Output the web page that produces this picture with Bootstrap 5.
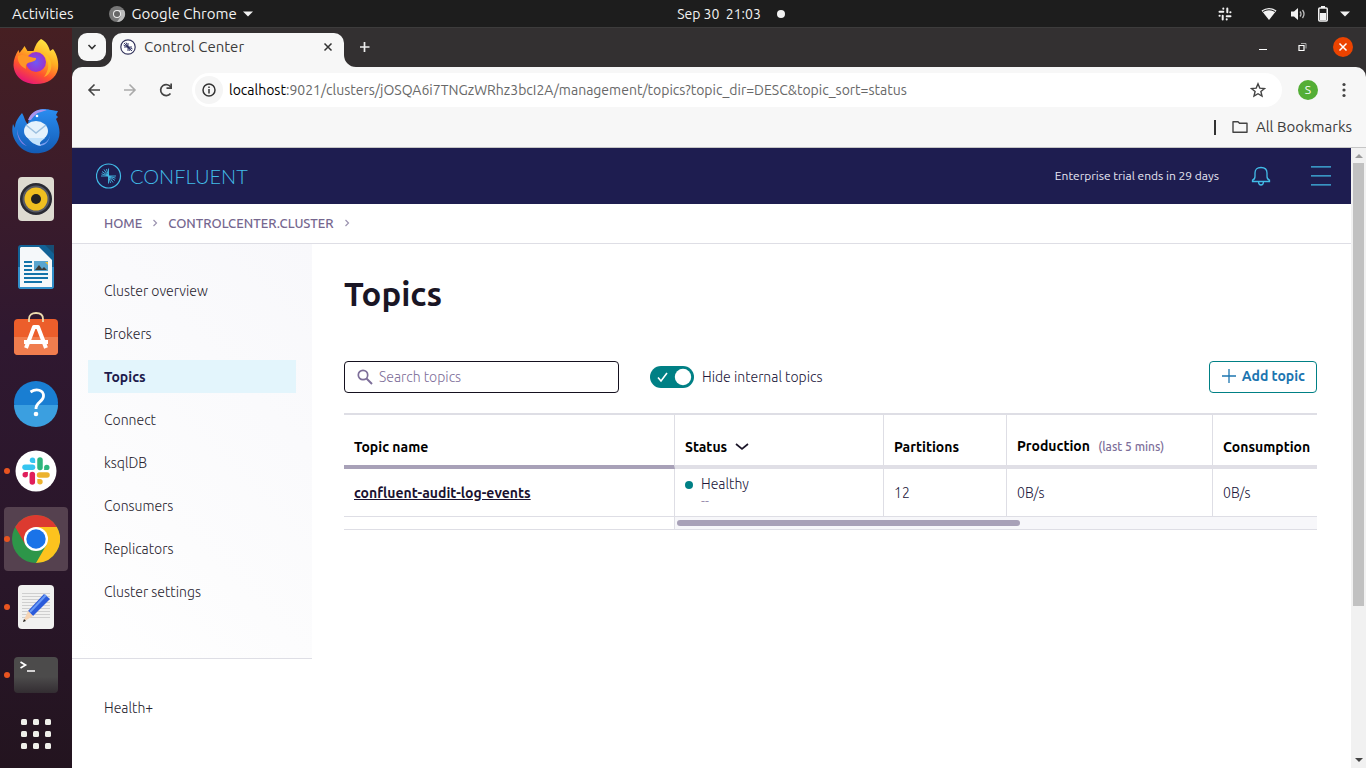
<!DOCTYPE html>
<html lang="en">
<head>
<meta charset="utf-8">
<meta name="viewport" content="width=device-width, initial-scale=1">
<title>Control Center</title>
<link href="https://cdn.jsdelivr.net/npm/bootstrap@5.3.0/dist/css/bootstrap.min.css" rel="stylesheet">
<style>
  :root { --line: #dedee5; --ink: #1b1528; --teal: #008085; --lilac: #7d6e99; }
  body { font-family: Ubuntu, "Open Sans", sans-serif; font-size: 14px; line-height: 20px; color: #000; background: #2c1830; }
  button { font: inherit; }
  svg { display: block; flex: none; }
  .desktop { height: 100vh; }
  .plain { background: none; border: 0; padding: 0; color: inherit; }

  .top-panel { grid-template-columns: 1fr auto 1fr; height: 28px; background: #1d1d1d; border-bottom: 1px solid #3d3c3c; color: #f2f2f2; font-size: 15px; }
  .app-menu { gap: 6px; margin-left: 34px; }
  .clock { padding-left: 96px; font-size: 14px; }
  .clock-dot { width: 8px; height: 8px; background: #f2f2f2; }

  .dock { width: 72px; background: linear-gradient(#461f22, #3c1c2a 20%, #2f1830 42%, #291629 75%, #23141f); padding-top: 3px; gap: 4px; }
  .dock-item { width: 64px; height: 64px; border-radius: 4px; position: relative; }
  .dock-item.current { background: #55414f; }
  .dock-item.running::before { content: ""; position: absolute; left: 0; top: 29px; width: 6px; height: 6px; border-radius: 50%; background: #e95420; }
  .dock-apps { width: 64px; height: 46px; }

  .tab-strip { height: 39px; background: #333031; padding: 5px 13px 0 6px; }
  .tab-search { width: 28px; height: 28px; border-radius: 9px; background: #f7f7f7; }
  .browser-tab { position: relative; width: 232px; height: 34px; margin-left: 6px; padding: 0 10px 6px 8px; border-radius: 10px 10px 0 0; background: #f7f7f7; color: #3c3c3c; font-size: 15px; }
  .tab-foot { position: absolute; bottom: 0; }
  .tab-foot.before { right: 100%; }
  .tab-foot.after { left: 100%; }
  .win-buttons { gap: 22px; height: 28px; }
  .win-close { width: 20px; height: 20px; background: #ec4300; }

  .browser-frame { background: #333031; }
  .toolbars { background: #f7f7f7; border-radius: 10px 10px 0 0; border-bottom: 1px solid #c6c6c6; height: 81px; color: #3c3c3c; }
  .toolbar-row { height: 34px; margin-top: 6px; padding: 0 20px 0 14px; }
  .nav-keys { width: 106px; gap: 20px; }
  .omnibox { background: #fff; border-radius: 17px; padding: 0 16px 0 3px; }
  .site-info { width: 28px; height: 28px; background: #f5f5f5; }
  .url { color: #686868; outline: 0; white-space: nowrap; margin-left: 6px; }
  .profile { width: 20px; height: 20px; background: #54ae36; color: #fff; font-size: 12px; }
  .bookmarks { height: 40px; padding: 0 14px 0 0; font-size: 15px; }
  .bookmarks-rule { width: 2px; height: 15px; background: #333; margin-right: 16px; }

  .viewport { background: #fff; min-height: 0; }
  .scroll-rail { width: 15px; background: #f1f1f1; }
  .scroll-key { height: 15px; }
  .scroll-thumb { width: 11px; height: 75%; background: #c1c1c1; }

  .brand-bar { height: 56px; background: #1e1d50; padding: 0 20px 0 24px; color: #e7e6f2; font-size: 12px; }
  .brand-name { font-family: Lato, sans-serif; font-weight: 300; font-size: 20px; color: #42bce8; }
  .crumbs { height: 40px; padding: 0 32px 1px; border-bottom: 1px solid var(--line); font-size: 13px; }
  .crumbs a { color: #75678f; font-weight: 500; }

  .side { width: 240px; }
  .side-main { padding: 30px 16px 50px; gap: 10px; border-bottom: 1px solid var(--line); background: linear-gradient(225deg, #f8f8fb, #fcfcfd 65%, #fff); }
  .side-more { padding: 32px 16px; }
  .side .nav-link { height: 33px; padding: 7px 16px; color: #28242f; font-weight: 300; }
  .side .nav-link.active { background: #e3f5fc; color: #1d1b4c; font-weight: 700; }

  .content { padding: 31px 34px 0 32px; min-width: 0; }
  .content h1 { font-size: 33px; line-height: 38px; font-weight: 700; color: #1a1625; }
  .controls { margin: 48px 0 20px; gap: 31px; }
  .search-box { width: 275px; height: 32px; border: 1px solid #15111f; border-radius: 4px; padding: 0 12px; gap: 6px; }
  .search-box input { border: 0; outline: 0; padding: 0; color: var(--ink); min-width: 0; font-weight: 300; }
  .search-box input::placeholder { color: var(--lilac); }
  .form-switch.internal { padding: 0; height: 32px; margin: 0; gap: 8px; color: #21163a; font-weight: 300; }
  .form-switch.internal .form-check-input { width: 44px; height: 22px; margin: 0; border: 0; background-color: var(--teal); background-size: auto; background-repeat: no-repeat; background-position: center;
    background-image: url("data:image/svg+xml,%3Csvg xmlns='http://www.w3.org/2000/svg' width='44' height='22' viewBox='0 0 44 22'%3E%3Cpath d='M8 11.5l3 3.5 6-8' fill='none' stroke='%23fff' stroke-width='1.6'/%3E%3Ccircle cx='33' cy='11' r='8.2' fill='%23fff'/%3E%3C/svg%3E"); }
  .add-topic { height: 32px; padding: 0 11px 2px 12px; border: 1px solid var(--teal); border-radius: 4px; background: #fff; color: #1c75b0; font-weight: 700; gap: 6px; }

  .topics { table-layout: fixed; width: 100%; border-top: 2px solid var(--line); border-collapse: separate; border-spacing: 0; }
  .topics th, .topics td { border-right: 1px solid var(--line); padding: 0 10px; overflow: hidden; white-space: nowrap; }
  .topics th:last-child, .topics td:last-child { border-right: 0; padding-right: 0; }
  .topics th { height: 54px; border-bottom: 4px solid #e0dfe6; padding-bottom: 8px; vertical-align: bottom; font-weight: 700; }
  .topics th:first-child { border-bottom-color: #a8a1b8; }
  .topics th small { font-size: 12px; font-weight: 500; color: var(--lilac); margin-left: 5px; }
  .topics td { height: 48px; border-bottom: 1px solid var(--line); vertical-align: middle; color: #21163a; font-weight: 300; }
  .topics a { color: #1b1230; font-weight: 700; }
  .topics .scroll-line td { height: 13px; padding: 0 2px; line-height: 0; }
  .topics .scroll-line td:last-child { background: #f7f7fa; }
  .scroll-bar { width: 343px; height: 6px; border-radius: 3px; background: #a8a1b8; }
  .topics .status-cell { padding-bottom: 4px; }
  .status-dot { width: 8px; height: 8px; margin-top: 7px; background: var(--teal); }
  .status-note { font-size: 14px; line-height: 14px; color: #968cab; }
  .col-name { width: 331px; } .col-status { width: 209px; } .col-parts { width: 123px; } .col-prod { width: 206px; }
</style>
</head>
<body>
<div class="desktop d-flex flex-column overflow-hidden">

  <header class="top-panel d-grid align-items-center flex-shrink-0">
    <div class="d-flex align-items-center">
      <button class="plain ms-2 ps-1">Activities</button>
      <button class="plain app-menu d-flex align-items-center">
        <svg width="18" height="18" viewBox="0 0 18 18"><circle cx="9" cy="9" r="8" fill="#777"/><path d="M9 9V5h7a8 8 0 0 1-7 12l4-6z" fill="#bbb"/><circle cx="9" cy="9" r="4" fill="#eee"/><circle cx="9" cy="9" r="3" fill="#666"/></svg>
        Google Chrome
        <svg width="10" height="6" viewBox="0 0 10 6"><path d="M0 .5h10L5 5.500z" fill="#f2f2f2"/></svg>
      </button>
    </div>
    <button class="plain clock d-flex align-items-center"><span>Sep 30&nbsp; 21:03</span><span class="clock-dot rounded-circle ms-3"></span></button>
    <div class="d-flex align-items-center justify-content-end pe-3">
      <svg class="me-4" width="14" height="14" viewBox="0 0 14 14" fill="none" stroke="#f2f2f2" stroke-width="2" stroke-linecap="round"><path d="M5.300 4.700H1.500M9.300 5.300V1.500M8.700 9.300h3.800M4.700 8.700v3.800M5.300 1.500v.2M12.500 5.300h-.2M8.700 12.500v-.2M1.500 8.700h.2"/></svg>
      <svg class="ms-1 me-2" width="18" height="14" viewBox="0 0 18 14"><path d="M1.500 3.500Q9-1.500 16.500 3.500L9 13z" fill="#f2f2f2"/><path d="M3 4.500Q9 1 15 4.500" stroke="#1d1d1d" fill="none"/></svg>
      <svg class="ms-1 me-2" width="16" height="14" viewBox="0 0 16 14"><path d="M1 4.500h3L8 1v12L4 9.500H1z" fill="#f2f2f2"/><path d="M10 4.500q2 2.500 0 5M12.500 3q3 4 0 8" fill="none" stroke="#bbb" stroke-width="1.300"/></svg>
      <svg class="ms-1 me-2" width="10" height="16" viewBox="0 0 10 16"><path d="M3 0h4v2H3z" fill="#f2f2f2"/><rect x=".75" y="2" width="8.500" height="13" rx="1" fill="none" stroke="#f2f2f2" stroke-width="1.500"/><path d="M2 7h6v7H2z" fill="#f2f2f2"/></svg>
      <svg class="ms-1" width="10" height="6" viewBox="0 0 10 6"><path d="M0 .5h10L5 5.500z" fill="#f2f2f2"/></svg>
    </div>
  </header>

  <div class="d-flex flex-grow-1 overflow-hidden">
    <nav class="dock d-flex flex-column align-items-center flex-shrink-0" aria-label="Dock">
      <button class="plain dock-item d-flex align-items-center justify-content-center" aria-label="Firefox">
        <svg width="48" height="48" viewBox="0 0 48 48"><defs><linearGradient id="fx" x1=".8" y1="0" x2=".3" y2="1"><stop offset="0" stop-color="#fff14a"/><stop offset=".4" stop-color="#ffae22"/><stop offset=".7" stop-color="#ff552d"/><stop offset="1" stop-color="#e5127b"/></linearGradient><radialGradient id="fp"><stop offset="0" stop-color="#6d59f5"/><stop offset="1" stop-color="#9b32ce"/></radialGradient></defs><path d="M29 0c5 2 8 8 9 12l3-2c4 5 6 13 5 20-2 9-10 15-22 15S2 38 1.500 26c0-6 2-10 5-15l1 3c2-3 4-5 5-7l3 5h6c2-6 4-10 7.500-12z" fill="url(#fx)"/><circle cx="24" cy="23" r="10" fill="url(#fp)"/><path d="M6 17c6-3 9 1 18 2 1 3-5 4-8 5-3 2-2 4-2 6-6-3-9-8-8-13z" fill="#ff9525"/><path d="M29 14c7 1 12 8 10 16-1 4-4 7-7 8 5-7 5-12 3-17-1-3-3-5-6-7z" fill="#ffc229" opacity=".7"/></svg>
      </button>
      <button class="plain dock-item d-flex align-items-center justify-content-center" aria-label="Thunderbird">
        <svg width="48" height="48" viewBox="0 0 48 48"><defs><linearGradient id="tb" x1="0" y1="0" x2="0" y2="1"><stop offset="0" stop-color="#2a8df0"/><stop offset="1" stop-color="#135bb5"/></linearGradient></defs><path d="M10 6c3 5 3 9 6 11 1-9 7-15 16-15 4 0 6 1 14 2l-2 4 2 2-2 2c5 10 5 20-2 27-8 9-25 10-34 1C1 33-1 25 1 17l2 4C3 14 7 10 10 6z" fill="url(#tb)"/><path d="M16 13C19 5 26 1 35 3l-6 2c-5 1-7 4-10 8z" fill="#a994ed"/><path d="M5 22c1 8 4 13 10 17-7-2-10-9-10-17z" fill="#8c84e8"/><path d="M38 28c-1 6-5 9-13 10 5 2 12-1 13-10z" fill="#7d9ff0"/><ellipse cx="24" cy="24" rx="12" ry="10" fill="#e5f2fc"/><path d="M16 31h17c-3 3-7 4-4 8-6-1-11-4-13-8z" fill="#c3e2fb"/><path d="M14 18l10 8 10-8" fill="none" stroke="#9dc0df" stroke-width="1.500"/><circle cx="25" cy="9" r="1.300" fill="#fff"/></svg>
      </button>
      <button class="plain dock-item d-flex align-items-center justify-content-center" aria-label="Rhythmbox">
        <svg width="48" height="48" viewBox="0 0 48 48"><rect x="6" y="2" width="36" height="44" rx="4" fill="#dedbd1"/><circle cx="24" cy="24" r="16" fill="#292a32"/><circle cx="24" cy="24" r="13.500" fill="#565965"/><circle cx="24" cy="24" r="11.500" fill="#efbf20"/><circle cx="24" cy="24" r="5" fill="#222"/></svg>
      </button>
      <button class="plain dock-item d-flex align-items-center justify-content-center" aria-label="LibreOffice Writer">
        <svg width="48" height="48" viewBox="0 0 48 48"><path d="M9 2h19l14 14v27a3 3 0 0 1-3 3H9a3 3 0 0 1-3-3V5a3 3 0 0 1 3-3z" fill="#126296"/><path d="M6 24h36v19a3 3 0 0 1-3 3H9a3 3 0 0 1-3-3z" fill="#318fca"/><path d="M9 4h18l13 13v27H8V5z" fill="#f5f8fa"/><path d="M27 2h15v15z" fill="#126296"/><path d="M33 2h9v9z" fill="#174e75"/><path d="M12 19h8m-8 4h8m-8 4h8m-8 4h24m-24 4h24m-24 4h18" stroke="#1474aa" stroke-width="2"/><path d="M22 18h14v10H22z" fill="#59a5cf"/><path d="M23 27l4-5 3 4 2-2 3 3z" fill="#3c3c38"/><path d="M33 19h3v3z" fill="#eabf3f"/></svg>
      </button>
      <button class="plain dock-item d-flex align-items-center justify-content-center" aria-label="Ubuntu Software">
        <svg width="48" height="48" viewBox="0 0 48 48"><rect x="2" y="8" width="44" height="36" rx="4" fill="#ec5e2b"/><path d="M2 26h44v14a4 4 0 0 1-4 4H6a4 4 0 0 1-4-4z" fill="#f07d4e"/><path d="M17 11V8c0-4 3-6 7-6s7 2 7 6v3" fill="none" stroke="#eddcae" stroke-width="1.800"/><path d="M14 37l8-21h4l8 21M12 31h24" fill="none" stroke="#fff" stroke-width="4" stroke-linejoin="round"/></svg>
      </button>
      <button class="plain dock-item d-flex align-items-center justify-content-center" aria-label="Help">
        <svg width="48" height="48" viewBox="0 0 48 48"><circle cx="24" cy="24" r="22" fill="#197ed2"/><path d="M2 26h44a22 22 0 0 1-44 0z" fill="#3b9fe0"/><path d="M18.500 13c6-4 13-2 13 4 0 6-8 6-7.500 13" fill="none" stroke="#fff" stroke-width="2.800"/><circle cx="24" cy="35" r="2.300" fill="#fff"/></svg>
      </button>
      <button class="plain dock-item running d-flex align-items-center justify-content-center" aria-label="Slack">
        <svg width="48" height="48" viewBox="0 0 48 48"><circle cx="24" cy="24" r="20.500" fill="#fff"/><g stroke-width="5.500" stroke-linecap="round" fill="none"><path d="M13 20.300h7.500" stroke="#36c5f0"/><path d="M28 13v7.500" stroke="#2eb67d"/><path d="M27.500 28H35" stroke="#ecb22e"/><path d="M20.300 27.500V35" stroke="#e01e5a"/></g><path d="M20.500 10.500a2.700 2.700 0 0 0 0 5.400h2.700v-2.700a2.700 2.700 0 0 0-2.700-2.700z" fill="#36c5f0"/><path d="M37.500 20.400a2.700 2.700 0 0 0-5.400 0v2.700h2.700a2.700 2.700 0 0 0 2.700-2.700z" fill="#2eb67d"/><path d="M28 37.500a2.700 2.700 0 0 0 0-5.400h-2.700v2.700a2.700 2.700 0 0 0 2.700 2.700z" fill="#ecb22e"/><path d="M10.500 27.800a2.700 2.700 0 0 0 5.400 0v-2.700h-2.700a2.700 2.700 0 0 0-2.700 2.700z" fill="#e01e5a"/></svg>
      </button>
      <button class="plain dock-item running current d-flex align-items-center justify-content-center" aria-label="Google Chrome">
        <svg width="48" height="48" viewBox="0 0 48 48"><circle cx="24" cy="24" r="24" fill="#2d9649"/><path d="M3.200 12A24 24 0 0 1 44.800 12H24L13.600 30z" fill="#dc3a30"/><path d="M44.800 12A24 24 0 0 1 24 48l10.400-18L24 12z" fill="#fcc31e"/><circle cx="24" cy="24" r="12" fill="#fff"/><circle cx="24" cy="24" r="9.700" fill="#1a73e8"/></svg>
      </button>
      <button class="plain dock-item running d-flex align-items-center justify-content-center" aria-label="Text Editor">
        <svg width="48" height="48" viewBox="0 0 48 48"><rect x="6" y="2" width="36" height="44" rx="4" fill="#f1f1f0"/><path d="M10 10.500h28M10 13.500h28M10 16.500h28M10 19.500h28M10 22.500h28M10 25.500h28M10 28.500h28M10 31.500h28M10 34.500h28" stroke="#cfcfcf"/><path d="M16 28l16-17 6 5-17 17z" fill="#2b5bda"/><path d="M18 29l16-17" stroke="#699af5" stroke-width="2"/><path d="M16 28l5 5-10 6z" fill="#f5d4b4"/><path d="M12 36l2 2-3 1z" fill="#222"/></svg>
      </button>
      <button class="plain dock-item running d-flex align-items-center justify-content-center" aria-label="Terminal">
        <svg width="48" height="48" viewBox="0 0 48 48"><defs><linearGradient id="tm" x1="0" y1="0" x2="0" y2="1"><stop offset=".55" stop-color="#4c4b4b"/><stop offset="1" stop-color="#332d32"/></linearGradient></defs><rect x="2" y="6" width="44" height="36" rx="4" fill="url(#tm)"/><path d="M8.500 11l5 3-5 3M15 20h8" stroke="#fff" stroke-width="1.700" fill="none"/></svg>
      </button>
      <button class="plain dock-apps d-flex align-items-center justify-content-center" aria-label="Show Applications">
        <svg width="30" height="30" viewBox="0 0 30 30" fill="#efefea"><rect width="6" height="6" rx="1.500"/><rect x="12" width="6" height="6" rx="1.500"/><rect x="24" width="6" height="6" rx="1.500"/><rect y="12" width="6" height="6" rx="1.500"/><rect x="12" y="12" width="6" height="6" rx="1.500"/><rect x="24" y="12" width="6" height="6" rx="1.500"/><rect y="24" width="6" height="6" rx="1.500"/><rect x="12" y="24" width="6" height="6" rx="1.500"/><rect x="24" y="24" width="6" height="6" rx="1.500"/></svg>
      </button>
    </nav>

    <div class="browser-frame d-flex flex-column flex-grow-1 overflow-hidden">
      <div class="tab-strip d-flex align-items-start flex-shrink-0">
        <button class="plain tab-search d-flex align-items-center justify-content-center" aria-label="Search tabs"><svg width="10" height="8" viewBox="0 0 10 8"><path d="M1.500 2L5 5.500 8.500 2" fill="none" stroke="#333" stroke-width="1.600"/></svg></button>
        <div class="browser-tab d-flex align-items-center">
          <svg class="tab-foot before" width="12" height="12" viewBox="0 0 12 12"><path d="M12 0v12H0A12 12 0 0 0 12 0z" fill="#f7f7f7"/></svg>
          <svg class="tab-foot after" width="12" height="12" viewBox="0 0 12 12"><path d="M0 0v12h12A12 12 0 0 1 0 0z" fill="#f7f7f7"/></svg>
          <svg width="16" height="16" viewBox="0 0 16 16"><circle cx="8" cy="8" r="7.200" fill="#fff" stroke="#33345c" stroke-width="1.200"/><path d="M8 8V4M8 8L6 3.500M8 8L4 4M8 8L3.500 6M8 8H4M8 8h4M8 8v4M8 8l2 4M8 8l4 4M8 8l4.500 2" stroke="#26285a" stroke-width=".9"/></svg>
          <span class="ms-2 flex-grow-1">Control Center</span>
          <button class="plain" aria-label="Close tab"><svg width="12" height="12" viewBox="0 0 12 12"><path d="M2.500 2.500l7 7m0-7l-7 7" stroke="#333" stroke-width="1.500"/></svg></button>
        </div>
        <button class="plain ms-3 mt-2 d-flex" aria-label="New tab"><svg width="12" height="12" viewBox="0 0 12 12"><path d="M4.500 1v10M-.5 6h10" stroke="#eee" stroke-width="1.700"/></svg></button>
        <div class="win-buttons d-flex align-items-center ms-auto">
          <button class="plain" aria-label="Minimise"><svg width="16" height="10" viewBox="0 0 16 10"><path d="M2 7.500h8" stroke="#fff"/></svg></button>
          <button class="plain" aria-label="Restore"><svg width="16" height="10" viewBox="0 0 16 10"><path d="M4 3.500h5v5H4z" stroke="#fff" fill="none" stroke-width="1.200"/><path d="M6 1.500h5v5" stroke="#aaa" fill="none"/></svg></button>
          <button class="plain win-close rounded-circle d-flex align-items-center justify-content-center" aria-label="Close"><svg width="10" height="10" viewBox="0 0 10 10"><path d="M1.500 1.500l7 7m0-7l-7 7" stroke="#fff" stroke-width="1.500"/></svg></button>
        </div>
      </div>

      <div class="toolbars overflow-hidden flex-shrink-0">
        <div class="toolbar-row d-flex align-items-center">
          <div class="nav-keys d-flex flex-shrink-0">
            <button class="plain" aria-label="Back"><svg width="16" height="16" viewBox="0 0 16 16"><path d="M14 8H3m5.500-5.500L3 8l5.500 5.500" fill="none" stroke="#444" stroke-width="1.600"/></svg></button>
            <button class="plain" aria-label="Forward"><svg width="16" height="16" viewBox="0 0 16 16"><path d="M2 8h11M7.500 2.500L13 8l-5.500 5.500" fill="none" stroke="#aaa" stroke-width="1.600"/></svg></button>
            <button class="plain" aria-label="Reload"><svg width="16" height="16" viewBox="0 0 16 16"><path d="M12.500 11.500A5.500 5.500 0 1 1 13 5.500" fill="none" stroke="#444" stroke-width="1.700"/><path d="M14 1.500V7H8.500V5.300h3.800V1.500z" fill="#444"/></svg></button>
          </div>
          <div class="omnibox d-flex align-items-center flex-grow-1 h-100">
            <button class="plain site-info rounded-circle d-flex align-items-center justify-content-center" aria-label="Site information"><svg width="14" height="14" viewBox="0 0 14 14"><circle cx="7" cy="7" r="6" fill="none" stroke="#333" stroke-width="1.500"/><path d="M7 6v4.500M7 3.500V5" stroke="#333" stroke-width="1.500"/></svg></button>
            <div class="url flex-grow-1" role="textbox" contenteditable="true" spellcheck="false" aria-label="Address"><span class="text-black">localhost</span>:9021/clusters/jOSQA6i7TNGzWRhz3bcI2A/management/topics?topic_dir=DESC&amp;topic_sort=status</div>
            <button class="plain" aria-label="Bookmark this tab"><svg width="16" height="16" viewBox="0 0 16 16"><path d="M8 1.800l1.800 4.300 4.700.4-3.600 3 1.100 4.600L8 11.700l-4 2.400 1.100-4.600-3.600-3 4.700-.4z" fill="none" stroke="#444" stroke-width="1.400"/></svg></button>
          </div>
          <button class="plain profile rounded-circle ms-3 d-flex align-items-center justify-content-center" aria-label="Profile">S</button>
          <button class="plain ms-4" aria-label="Menu"><svg width="4" height="16" viewBox="0 0 4 16" fill="#444"><circle cx="2" cy="2.500" r="1.600"/><circle cx="2" cy="8" r="1.600"/><circle cx="2" cy="13.500" r="1.600"/></svg></button>
        </div>
        <div class="bookmarks d-flex align-items-center justify-content-end">
          <span class="bookmarks-rule"></span>
          <button class="plain d-flex align-items-center gap-2"><svg width="16" height="14" viewBox="0 0 16 14"><path d="M1 1.700h5l1.500 1.600H15v9H1z" fill="none" stroke="#444" stroke-width="1.400" stroke-linejoin="round"/></svg>All Bookmarks</button>
        </div>
      </div>

      <div class="viewport d-flex flex-grow-1">
        <div class="d-flex flex-column flex-grow-1 overflow-hidden">
          <header class="brand-bar d-flex align-items-center flex-shrink-0">
            <a href="#" class="d-flex align-items-center gap-2 text-decoration-none">
              <svg width="26" height="26" viewBox="0 0 26 26" fill="none" stroke="#42bce8"><circle cx="12.500" cy="13" r="12" stroke-width="1.200"/><path d="M5 13h15M12.500 5.500v15M12.500 13L10.500 6M12.500 13L8 6.500M12.500 13L6 8.500M12.500 13L5.500 10.800M12.500 13l2 7M12.500 13l4.500 6.500M12.500 13l6.500 4.500M12.500 13l7 2.200" stroke-width=".9"/></svg>
              <span class="brand-name">CONFLUENT</span>
            </a>
            <span class="ms-auto">Enterprise trial ends in 29 days</span>
            <button class="plain ms-4 ps-2" aria-label="Notifications"><svg width="20" height="20" viewBox="0 0 20 20" fill="none" stroke="#42bce8" stroke-width="1.300"><path d="M1.500 15.500v-1.300c2-.7 2.500-1.700 2.500-4V7q0-5.500 6-5.500T16 7v3.200c0 2.300.5 3.300 2.500 4v1.300zM7.500 16q.2 3 2.500 3t2.500-3"/></svg></button>
            <button class="plain ms-4 ps-3" aria-label="Main menu"><svg width="20" height="20" viewBox="0 0 20 20"><path d="M0 .8h20M0 9.800h20M0 18.800h20" stroke="#42bce8" stroke-width="1.300"/></svg></button>
          </header>
          <nav class="crumbs d-flex align-items-center flex-shrink-0" aria-label="Breadcrumb">
            <a href="#" class="text-decoration-none">HOME</a>
            <svg class="mx-2" width="10" height="8" viewBox="0 0 10 8"><path d="M3.500 1l3 3-3 3" fill="none" stroke="#9c93b0" stroke-width="1.200"/></svg>
            <a href="#" class="text-decoration-none">CONTROLCENTER.CLUSTER</a>
            <svg class="mx-2" width="10" height="8" viewBox="0 0 10 8"><path d="M3.500 1l3 3-3 3" fill="none" stroke="#9c93b0" stroke-width="1.200"/></svg>
          </nav>

          <div class="d-flex flex-grow-1">
            <aside class="side flex-shrink-0">
              <nav class="side-main nav flex-column" aria-label="Cluster">
                <a class="nav-link" href="#">Cluster overview</a>
                <a class="nav-link" href="#">Brokers</a>
                <a class="nav-link active" href="#" aria-current="page">Topics</a>
                <a class="nav-link" href="#">Connect</a>
                <a class="nav-link" href="#">ksqlDB</a>
                <a class="nav-link" href="#">Consumers</a>
                <a class="nav-link" href="#">Replicators</a>
                <a class="nav-link" href="#">Cluster settings</a>
              </nav>
              <nav class="side-more nav flex-column" aria-label="More"><a class="nav-link" href="#">Health+</a></nav>
            </aside>

            <main class="content flex-grow-1">
              <h1 class="m-0">Topics</h1>
              <div class="controls d-flex align-items-center">
                <label class="search-box d-flex align-items-center">
                  <svg width="16" height="16" viewBox="0 0 16 16" fill="none" stroke="#7d6e99"><circle cx="6" cy="6" r="4.700" stroke-width="1.700"/><path d="M9.500 9.500l5.500 5.500" stroke-width="2"/></svg>
                  <input class="flex-grow-1" type="text" placeholder="Search topics" aria-label="Search topics">
                </label>
                <div class="form-check form-switch internal d-flex align-items-center">
                  <input class="form-check-input float-none" type="checkbox" role="switch" id="hideInternal" checked>
                  <label for="hideInternal">Hide internal topics</label>
                </div>
                <button class="add-topic d-flex align-items-center ms-auto"><svg width="14" height="14" viewBox="0 0 14 14"><path d="M7 0v14M0 7h14" stroke="#1c75b0" stroke-width="1.300"/></svg>Add topic</button>
              </div>

              <table class="topics">
                <colgroup><col class="col-name"><col class="col-status"><col class="col-parts"><col class="col-prod"><col></colgroup>
                <thead>
                  <tr>
                    <th scope="col">Topic name</th>
                    <th scope="col"><span class="d-flex align-items-center gap-2">Status <svg width="14" height="8" viewBox="0 0 14 8"><path d="M1 1l6 5 6-5" fill="none" stroke="#1b1528" stroke-width="1.700"/></svg></span></th>
                    <th scope="col">Partitions</th>
                    <th scope="col">Production <small>(last 5 mins)</small></th>
                    <th scope="col">Consumption</th>
                  </tr>
                </thead>
                <tbody>
                  <tr>
                    <td><a href="#">confluent-audit-log-events</a></td>
                    <td class="status-cell"><div class="d-flex gap-2"><span class="status-dot rounded-circle"></span><div>Healthy<div class="status-note">--</div></div></div></td>
                    <td>12</td>
                    <td>0B/s</td>
                    <td>0B/s</td>
                  </tr>
                  <tr class="scroll-line"><td></td><td colspan="4"><div class="scroll-bar"></div></td></tr>
                </tbody>
              </table>
            </main>
          </div>
        </div>
        <div class="scroll-rail d-flex flex-column align-items-center flex-shrink-0">
          <svg class="scroll-key" width="15" height="15" viewBox="0 0 15 15"><path d="M4 10l4-4 4 4z" fill="#9b9b9b"/></svg>
          <div class="d-flex flex-column align-items-center flex-grow-1 w-100"><div class="scroll-thumb"></div></div>
          <svg class="scroll-key" width="15" height="15" viewBox="0 0 15 15"><path d="M4 5l4 4 4-4z" fill="#444"/></svg>
        </div>
      </div>
    </div>
  </div>
</div>
<script src="https://cdn.jsdelivr.net/npm/bootstrap@5.3.0/dist/js/bootstrap.bundle.min.js"></script>
</body>
</html>
